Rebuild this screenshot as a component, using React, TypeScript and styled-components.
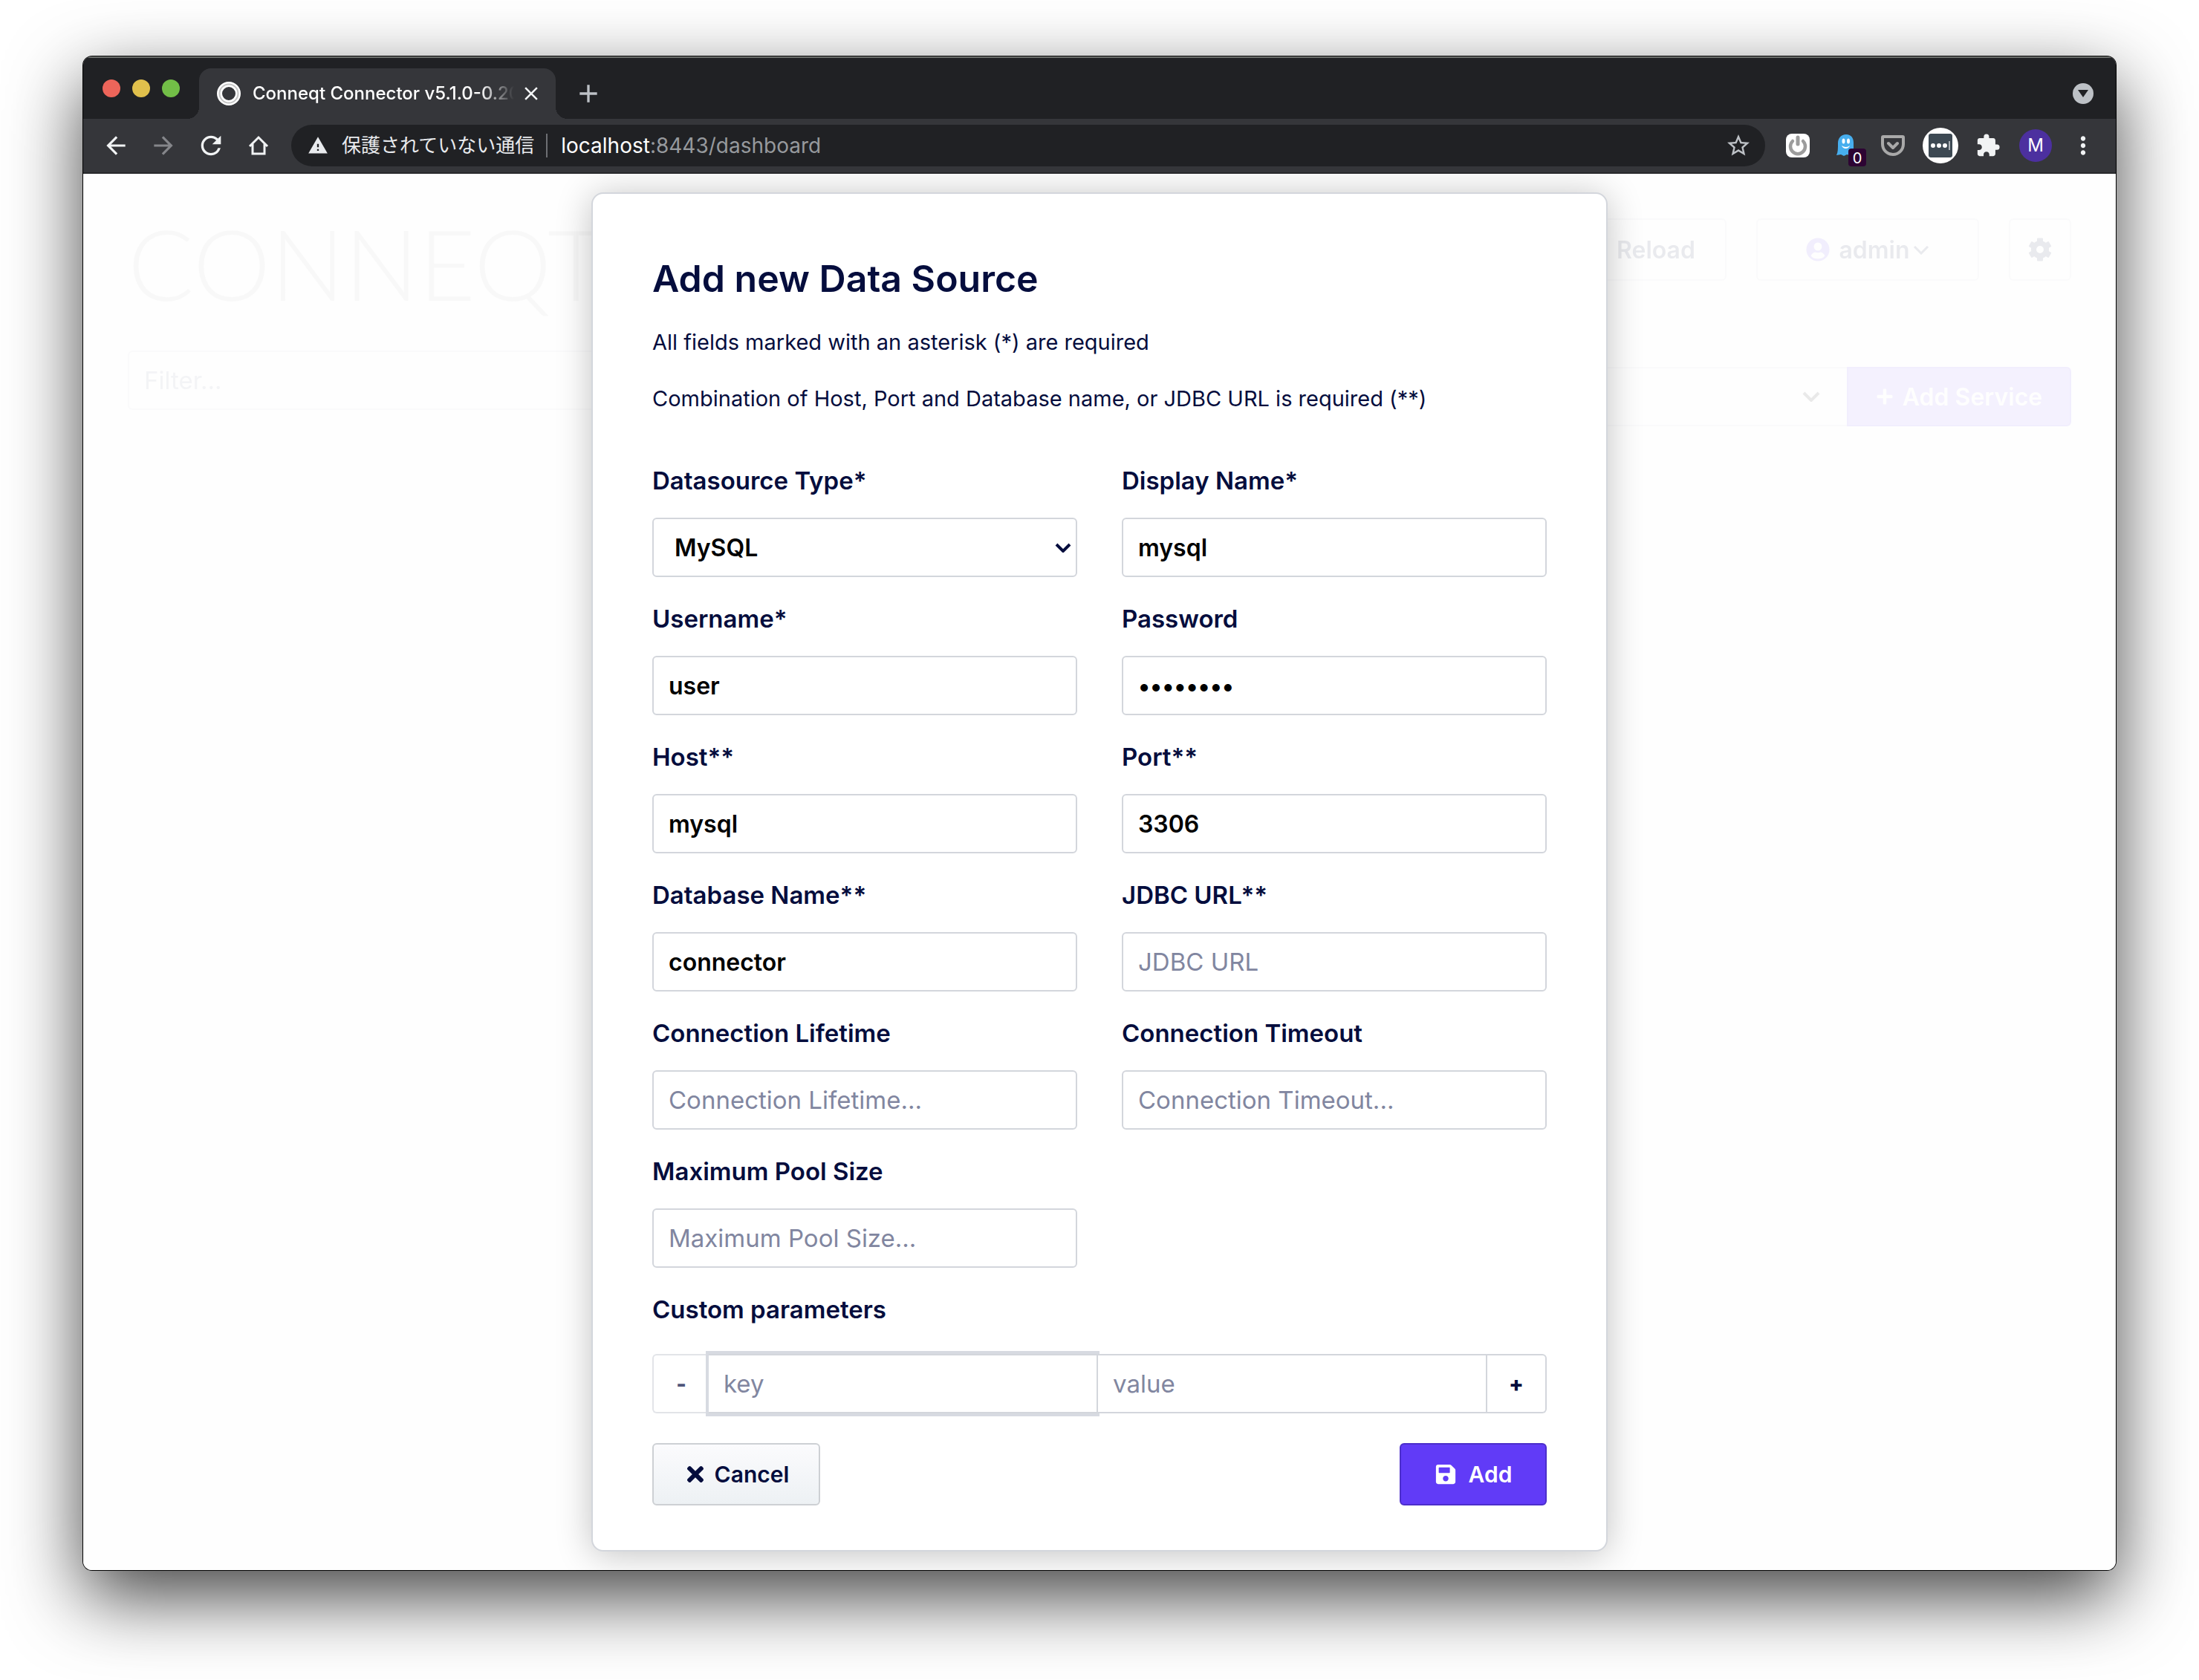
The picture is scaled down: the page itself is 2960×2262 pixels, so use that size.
import React, { useId } from 'react';
import styled, { createGlobalStyle, css } from 'styled-components';
import { MdAdd, MdArrowBack, MdArrowForward, MdClose, MdExtension, MdMoreVert, MdRefresh, MdStarOutline, MdWarning } from 'react-icons/md';
import { FaPlus, FaSave, FaSyncAlt, FaTimes } from 'react-icons/fa';

const navy = '#050d3d';
const line = '#d3d6dc';
const purple = '#613bf7';

const GlobalStyle = createGlobalStyle`
  * { box-sizing: border-box; }
  body { margin: 0; background: #fff; font-family: Inter, "Noto Sans CJK JP", sans-serif; }
  button, input, select { font-family: inherit; margin: 0; }
`;

/* ---------- desktop and window ---------- */

const Desktop = styled.div`
  display: flex;
  min-height: 100vh;
  padding: 76px 112px 148px;
`;

const Window = styled.div`
  flex: 1;
  display: flex;
  flex-direction: column;
  min-width: 0;
  border-radius: 12px;
  overflow: hidden;
  background: #fff;
  box-shadow: 0 0 0 1px #000, 0 36px 100px rgba(0, 0, 0, 0.74);
`;

const Chrome = styled.header`
  background: #35363a;
  border-bottom: 2px solid #28292c;
`;

const TabStrip = styled.div`
  display: flex;
  align-items: center;
  height: 84px;
  padding: 16px 30px 0 26px;
  background: #202124;
  box-shadow: inset 0 2px #6b6e6b;
`;

const Lights = styled.div`
  display: flex;
  gap: 16px;
  margin: 0 26px 14px 0;
`;

const Light = styled.span<{ $color: string }>`
  width: 24px;
  height: 24px;
  border-radius: 50%;
  background: ${(p) => p.$color};
`;

const Tab = styled.div`
  display: flex;
  align-items: center;
  width: 480px;
  height: 68px;
  padding: 0 18px 0 24px;
  border-radius: 16px 16px 0 0;
  background: #35363a;
  color: #fff;
  position: relative;

  &::before,
  &::after {
    content: '';
    position: absolute;
    bottom: 0;
    width: 16px;
    height: 16px;
  }
  &::before {
    right: 100%;
    background: radial-gradient(circle at 0 0, transparent 16px, #35363a 16px);
  }
  &::after {
    left: 100%;
    background: radial-gradient(circle at 100% 0, transparent 16px, #35363a 16px);
  }
`;

const TabTitle = styled.span`
  flex: 1;
  min-width: 0;
  margin: 0 8px 0 16px;
  overflow: hidden;
  white-space: nowrap;
  font-size: 24px;
  line-height: 32px;
  font-weight: 500;
  mask-image: linear-gradient(to right, #000 87%, transparent);
`;

const ChromeButton = styled.button<{ $dim?: boolean }>`
  display: flex;
  align-items: center;
  justify-content: center;
  flex: none;
  padding: 0;
  border: 0;
  background: none;
  color: ${(p) => (p.$dim ? '#85868a' : '#f1f3f4')};
`;

const NewTab = styled(ChromeButton)`
  margin-left: 24px;
  color: #bdc1c6;
`;

const TabSearch = styled(ChromeButton)`
  width: 28px;
  height: 28px;
  margin-left: auto;
  border-radius: 50%;
  background: #bdc1c6;
`;

const Toolbar = styled.div`
  display: flex;
  align-items: center;
  height: 72px;
  padding: 0 12px;
`;

const NavButton = styled(ChromeButton)`
  width: 64px;
  height: 64px;
`;

const Omnibox = styled.div`
  flex: 1;
  display: flex;
  align-items: center;
  height: 56px;
  margin: 0 12px;
  padding: 0 18px 0 22px;
  border-radius: 28px;
  background: #202124;
  color: #e8eaed;
`;

const SecurityText = styled.span`
  margin-left: 18px;
  padding-right: 16px;
  border-right: 2px solid #6d6f73;
  font-size: 26px;
  line-height: 32px;
`;

const Url = styled.span`
  flex: 1;
  padding-left: 18px;
  color: #96999d;
  font-size: 28px;
  line-height: 32px;

  b { font-weight: 400; color: #fff; }
`;

const GhostBadge = styled.span`
  position: absolute;
  right: 4px;
  bottom: 4px;
  width: 24px;
  height: 24px;
  border-radius: 4px;
  background: #2d0433;
  color: #fff;
  font-size: 20px;
  line-height: 26px;
  text-align: center;
`;

const ExtensionButton = styled(ChromeButton)`
  position: relative;
  width: 64px;
  height: 64px;
`;

const Avatar = styled.span`
  width: 44px;
  height: 44px;
  border-radius: 50%;
  background: #4c309f;
  color: #fff;
  font-size: 24px;
  line-height: 44px;
`;

/* ---------- page ---------- */

const Page = styled.main`
  flex: 1;
  display: grid;
  grid-template: 1fr / minmax(0, 1fr);
  overflow: hidden;
  background: #fefefe;
`;

const Dashboard = styled.div`
  grid-area: 1 / 1;
  display: grid;
  grid-template-columns: 1fr 1fr;
  gap: 60px;
  align-content: start;
  padding: 60px;
  opacity: 0.08;
`;

const Side = styled.div`
  display: flex;
  flex-direction: column;
`;

const Logo = styled.div`
  color: #c0c0c0;
  font-family: Lato, sans-serif;
  font-size: 132px;
  line-height: 120px;
  font-weight: 300;
  margin-bottom: 58px;
`;

const fieldBox = css`
  width: 100%;
  min-width: 0;
  height: 80px;
  border: 2px solid ${line};
  border-radius: 6px;
  background: #fff;
  font-size: 32px;
  padding: 0 20px;
`;

const Input = styled.input`
  ${fieldBox}
  color: #000;
  font-weight: 600;
  outline: 0;

  &::placeholder {
    color: #8186a0;
    opacity: 1;
    font-size: 33px;
    font-weight: 400;
  }
`;

const Actions = styled.div`
  display: flex;
  justify-content: flex-end;
  gap: 40px;
  margin-bottom: 116px;
`;

const HeaderButton = styled.button<{ $width: number }>`
  display: flex;
  align-items: center;
  justify-content: center;
  gap: 12px;
  width: ${(p) => p.$width}px;
  height: 84px;
  border: 2px solid ${line};
  border-radius: 6px;
  background: #fff;
  color: ${navy};
  font-size: 32px;
  font-weight: 600;
`;

const UserName = styled.span`
  display: flex;
  align-items: center;
  gap: 4px;
`;

const ServiceRow = styled.div`
  display: flex;
`;

const AddService = styled.button`
  display: flex;
  align-items: center;
  justify-content: center;
  gap: 12px;
  flex: none;
  width: 302px;
  height: 80px;
  border: 2px solid ${purple};
  border-radius: 0 6px 6px 0;
  background: #8e69ff;
  color: #fff;
  font-size: 32px;
  font-weight: 600;
`;

/* ---------- dialog ---------- */

const Dialog = styled.form`
  grid-area: 1 / 1;
  justify-self: center;
  align-self: start;
  position: relative;
  width: 50%;
  margin: 25px 0;
  padding: 82px 80px 60px;
  border: 2px solid ${line};
  border-radius: 16px;
  background: #fff;
  box-shadow: 0 4px 48px rgba(0, 0, 0, 0.24);
  color: ${navy};
`;

const Title = styled.h1`
  margin: 0 0 34px;
  font-size: 50px;
  line-height: 64px;
  font-weight: 600;
`;

const Note = styled.p`
  margin: 0 0 36px;
  font-size: 29px;
  line-height: 40px;
`;

const Fields = styled.div`
  display: grid;
  grid-template-columns: 1fr 1fr;
  gap: 36px 60px;
  margin-top: 70px;
`;

const Field = styled.div`
  display: flex;
  flex-direction: column;
  gap: 30px;
`;

const Label = styled.label`
  font-size: 33px;
  line-height: 40px;
  font-weight: 600;
`;

const SelectBox = styled.div`
  flex: 1;
  display: grid;
  align-items: center;
  min-width: 0;

  select, svg { grid-area: 1 / 1; }
  svg { justify-self: end; pointer-events: none; }
`;

const Select = styled.select<{ $flat?: boolean }>`
  ${fieldBox}
  appearance: none;
  padding: 0 28px;
  color: #000;
  font-weight: 600;
  ${(p) => p.$flat && 'border-right: 0; border-radius: 6px 0 0 6px;'}
`;

const Params = styled.fieldset`
  margin: 36px 0 40px;
  padding: 0;
  border: 0;
`;

const Legend = styled.legend`
  padding: 0;
  margin-bottom: 40px;
  font-size: 33px;
  line-height: 40px;
  font-weight: 600;
`;

const ParamRow = styled.div`
  display: flex;
`;

const ParamInput = styled(Input)<{ $focused?: boolean }>`
  flex: 1;
  border-radius: 0;
  ${(p) => p.$focused && 'border-left-width: 0; border-right-width: 0; box-shadow: 0 0 0 4px #d7dae1;'}
`;

const StepButton = styled.button<{ $side: 'left' | 'right' }>`
  flex: none;
  width: ${(p) => (p.$side === 'left' ? 76 : 80)}px;
  height: 80px;
  padding: 0;
  border: 2px solid ${(p) => (p.$side === 'left' ? '#e2e4e8' : line)};
  border-${(p) => (p.$side === 'left' ? 'right' : 'left')}-width: 0;
  border-radius: ${(p) => (p.$side === 'left' ? '6px 0 0 6px' : '0 6px 6px 0')};
  background: #fff;
  color: ${(p) => (p.$side === 'left' ? '#50567a' : navy)};
  font-size: 29px;
  font-weight: 800;
`;

const Footer = styled.div`
  display: flex;
  justify-content: space-between;
`;

const FormButton = styled.button<{ $primary?: boolean }>`
  display: flex;
  align-items: center;
  justify-content: center;
  gap: ${(p) => (p.$primary ? 16 : 10)}px;
  width: ${(p) => (p.$primary ? 198 : 226)}px;
  height: 84px;
  padding: 0;
  border: 2px solid ${(p) => (p.$primary ? '#4c2ecb' : '#cdd0d4')};
  border-radius: 6px;
  background: ${(p) => (p.$primary ? purple : 'linear-gradient(#fbfbfd, #edf1f4)')};
  color: ${(p) => (p.$primary ? '#fff' : navy)};
  font-size: 30px;
  font-weight: 600;
`;

/* ---------- drawings ---------- */

const Favicon = () => (
  <svg width="32" height="32" viewBox="0 0 32 32" fill="none">
    <circle cx="16" cy="16" r="12.5" stroke="#fff" strokeWidth="7" />
    <circle cx="16" cy="16" r="12.5" stroke="#c4c4c4" strokeWidth="2" />
  </svg>
);

const HomeIcon = () => (
  <svg width="28" height="28" viewBox="0 0 28 28" fill="none" stroke="#f1f3f4" strokeWidth="3">
    <path d="M2 15 14 3l12 12M6 12v13h16V12" />
  </svg>
);

const PowerIcon = () => (
  <svg width="32" height="32" viewBox="0 0 32 32" fill="none">
    <rect width="32" height="32" rx="8" fill="#fff" />
    <path d="M9 10a10 10 0 1 0 14 0" stroke="#9c9c9c" strokeWidth="4.5" strokeLinecap="round" />
    <path d="M16 5v9" stroke="#9c9c9c" strokeWidth="5" strokeLinecap="round" />
  </svg>
);

const GhostIcon = () => (
  <svg width="26" height="30" viewBox="0 0 26 30">
    <path d="M14 0c7 0 10 5 10 11v16l-5 1-4-1-4 2-4-2-6 1c2-4 2-9 2-16C3 5 7 0 14 0z" fill="#47aeee" />
    <ellipse cx="10.500" cy="9" rx="2" ry="3.500" fill="#fff" />
    <ellipse cx="17" cy="9" rx="2" ry="3.500" fill="#fff" />
    <path d="M8 15q6 4 11 0-1.500 4-5.500 4T8 15z" fill="#fff" />
  </svg>
);

const PocketIcon = () => (
  <svg width="32" height="28" viewBox="0 0 32 28" fill="none" stroke="#a9a9a9" strokeLinejoin="round" strokeLinecap="round">
    <path d="M3 2h26q1 0 1 1v9a14 14 0 0 1-28 0V3q0-1 1-1z" strokeWidth="4" />
    <path d="M10 11l6 6 6-6" strokeWidth="4" />
  </svg>
);

const PasswordManagerIcon = () => (
  <svg width="48" height="48" viewBox="0 0 48 48">
    <circle cx="24" cy="24" r="24" fill="#fff" />
    <rect x="8" y="8" width="32" height="32" rx="3" fill="#3d4953" />
    <circle cx="14" cy="24" r="3" fill="#fff" />
    <circle cx="22" cy="24" r="3" fill="#fff" />
    <circle cx="30" cy="24" r="3" fill="#fff" />
    <path d="M36 18v12" stroke="#aab0b5" strokeWidth="2" />
  </svg>
);

const UserIcon = () => (
  <svg width="32" height="32" viewBox="0 0 32 32">
    <circle cx="16" cy="16" r="15.500" fill={purple} />
    <circle cx="16" cy="12" r="5.500" fill="#fff" />
    <path d="M6.500 24.500c1-3 4-5 6-5q3.500 1.500 7 0c2 0 5 2 6 5-2.500 3-6 4-9.500 4s-7-1-9.500-4z" fill="#fff" />
  </svg>
);

const GearIcon = () => (
  <svg width="32" height="32" viewBox="-16 -16 32 32" fill={navy}>
    <circle r="8.500" fill="none" stroke={navy} strokeWidth="7" />
    {[0, 60, 120, 180, 240, 300].map((a) => (
      <rect key={a} x="-4" y="-15.500" width="8" height="7" rx="1" transform={`rotate(${a})`} />
    ))}
  </svg>
);

const Chevron = ({ size, box, weight }: { size: number; box: number; weight: number }) => (
  <svg width={box} height={size} viewBox={`0 0 ${box} ${size}`} fill="none" stroke="currentColor" strokeWidth={weight}>
    <path d={`M2 2l${size - 4} ${size - 4} ${size - 4} ${4 - size}`} />
  </svg>
);

/* ---------- app ---------- */

type FieldProps = { label: string; value?: string; placeholder?: string; type?: string };

const TextField = ({ label, value = '', placeholder, type = 'text' }: FieldProps) => {
  const id = useId();
  return (
    <Field>
      <Label htmlFor={id}>{label}</Label>
      <Input id={id} type={type} defaultValue={value} placeholder={placeholder} />
    </Field>
  );
};

const fields: FieldProps[] = [
  { label: 'Display Name*', value: 'mysql' },
  { label: 'Username*', value: 'user' },
  { label: 'Password', value: 'password', type: 'password' },
  { label: 'Host**', value: 'mysql' },
  { label: 'Port**', value: '3306' },
  { label: 'Database Name**', value: 'connector' },
  { label: 'JDBC URL**', placeholder: 'JDBC URL' },
  { label: 'Connection Lifetime', placeholder: 'Connection Lifetime...' },
  { label: 'Connection Timeout', placeholder: 'Connection Timeout...' },
  { label: 'Maximum Pool Size', placeholder: 'Maximum Pool Size...' },
];

const BrowserChrome = () => (
  <Chrome>
    <TabStrip>
      <Lights>
        <Light $color="#ed655a" />
        <Light $color="#e0c04c" />
        <Light $color="#72be47" />
      </Lights>
      <Tab>
        <Favicon />
        <TabTitle>Conneqt Connector v5.1.0-0.20</TabTitle>
        <ChromeButton type="button" aria-label="Close tab"><MdClose size={30} /></ChromeButton>
      </Tab>
      <NewTab type="button" aria-label="New tab"><MdAdd size={40} /></NewTab>
      <TabSearch type="button" aria-label="Search tabs">
        <svg width="14" height="10" viewBox="0 0 14 10"><path d="M0 0h14L7 10z" fill="#202124" /></svg>
      </TabSearch>
    </TabStrip>
    <Toolbar>
      <NavButton type="button" aria-label="Back"><MdArrowBack size={38} /></NavButton>
      <NavButton type="button" aria-label="Forward" $dim><MdArrowForward size={38} /></NavButton>
      <NavButton type="button" aria-label="Reload page"><MdRefresh size={40} /></NavButton>
      <NavButton type="button" aria-label="Home"><HomeIcon /></NavButton>
      <Omnibox>
        <MdWarning size={28} />
        <SecurityText>保護されていない通信</SecurityText>
        <Url><b>localhost</b>:8443/dashboard</Url>
        <ChromeButton type="button" aria-label="Bookmark"><MdStarOutline size={36} color="#bdc1c6" /></ChromeButton>
      </Omnibox>
      <ExtensionButton type="button" aria-label="Power"><PowerIcon /></ExtensionButton>
      <ExtensionButton type="button" aria-label="Ghostery"><GhostIcon /><GhostBadge>0</GhostBadge></ExtensionButton>
      <ExtensionButton type="button" aria-label="Pocket"><PocketIcon /></ExtensionButton>
      <ExtensionButton type="button" aria-label="Passwords"><PasswordManagerIcon /></ExtensionButton>
      <ExtensionButton type="button" aria-label="Extensions"><MdExtension size={34} /></ExtensionButton>
      <ExtensionButton type="button" aria-label="Profile"><Avatar>M</Avatar></ExtensionButton>
      <ExtensionButton type="button" aria-label="Menu"><MdMoreVert size={38} /></ExtensionButton>
    </Toolbar>
  </Chrome>
);

export default function App() {
  const typeId = useId();
  return (
    <>
      <GlobalStyle />
      <Desktop>
        <Window>
          <BrowserChrome />
          <Page>
            <Dashboard>
              <Side>
                <Logo>CONNEQT</Logo>
                <Input placeholder="Filter..." aria-label="Filter" />
              </Side>
              <Side>
                <Actions>
                  <HeaderButton type="button" $width={232}><FaSyncAlt size={30} />Reload</HeaderButton>
                  <HeaderButton type="button" $width={300}>
                    <UserIcon />
                    <UserName>admin<Chevron size={13} box={22} weight={3} /></UserName>
                  </HeaderButton>
                  <HeaderButton type="button" $width={84} aria-label="Settings"><GearIcon /></HeaderButton>
                </Actions>
                <ServiceRow>
                  <SelectBox>
                    <Select $flat aria-label="Service"><option></option></Select>
                    <Chevron size={14} box={60} weight={4} />
                  </SelectBox>
                  <AddService type="button"><FaPlus size={24} />Add Service</AddService>
                </ServiceRow>
              </Side>
            </Dashboard>
            <Dialog onSubmit={(e) => e.preventDefault()}>
              <Title>Add new Data Source</Title>
              <Note>All fields marked with an asterisk (*) are required</Note>
              <Note>Combination of Host, Port and Database name, or JDBC URL is required (**)</Note>
              <Fields>
                <Field>
                  <Label htmlFor={typeId}>Datasource Type*</Label>
                  <SelectBox>
                    <Select id={typeId} defaultValue="MySQL"><option>MySQL</option></Select>
                    <Chevron size={13} box={30} weight={4} />
                  </SelectBox>
                </Field>
                {fields.map((f) => <TextField key={f.label} {...f} />)}
              </Fields>
              <Params>
                <Legend>Custom parameters</Legend>
                <ParamRow>
                  <StepButton type="button" $side="left" aria-label="Remove parameter">-</StepButton>
                  <ParamInput $focused placeholder="key" aria-label="key" />
                  <ParamInput placeholder="value" aria-label="value" />
                  <StepButton type="button" $side="right" aria-label="Add parameter">+</StepButton>
                </ParamRow>
              </Params>
              <Footer>
                <FormButton type="button"><FaTimes size={32} />Cancel</FormButton>
                <FormButton type="submit" $primary><FaSave size={30} />Add</FormButton>
              </Footer>
            </Dialog>
          </Page>
        </Window>
      </Desktop>
    </>
  );
}
